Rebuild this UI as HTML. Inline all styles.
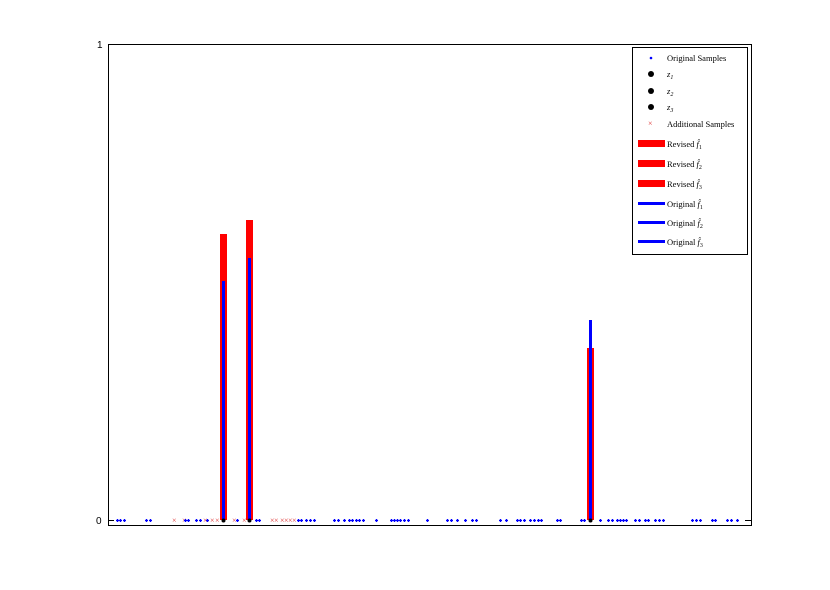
<!DOCTYPE html>
<html><head><meta charset="utf-8"><style>
html,body{margin:0;padding:0;background:#fff;width:830px;height:590px;overflow:hidden}
svg{display:block}
text{font-family:"Liberation Serif",serif;font-size:8.5px;fill:#000}
text.rx{fill:#d33;font-size:8px}
</style></head><body>
<svg width="830" height="590" viewBox="0 0 830 590">
<rect x="108.5" y="44.5" width="643" height="481" fill="#fff" stroke="#000" stroke-width="1"/>
<line x1="108" y1="44.5" x2="114" y2="44.5" stroke="#000"/>
<line x1="108" y1="520.5" x2="114" y2="520.5" stroke="#000"/>
<line x1="745" y1="520.5" x2="751" y2="520.5" stroke="#000"/>
<text x="97" y="48" style="font-size:10px;font-family:'Liberation Sans',sans-serif">1</text>
<text x="96" y="524" style="font-size:10px;font-family:'Liberation Sans',sans-serif">0</text>
<rect x="220" y="234" width="7" height="286" fill="#f00"/>
<rect x="222" y="281" width="3" height="239" fill="#00f"/>
<rect x="246" y="220" width="7" height="300" fill="#f00"/>
<rect x="248" y="258" width="3" height="262" fill="#00f"/>
<rect x="587" y="348" width="7" height="172" fill="#f00"/>
<rect x="589" y="320" width="3" height="200" fill="#00f"/>
<g fill="#000"><circle cx="223.5" cy="520.5" r="2"/><circle cx="249.5" cy="520.5" r="2"/><circle cx="590.5" cy="520.5" r="2"/></g>
<g>
<text class="rx" x="172" y="523">×</text><text class="rx" x="182" y="523">×</text><text class="rx" x="203" y="523">×</text><text class="rx" x="210" y="523">×</text><text class="rx" x="215" y="523">×</text><text class="rx" x="232" y="523">×</text><text class="rx" x="242" y="523">×</text><text class="rx" x="270" y="523">×</text><text class="rx" x="274" y="523">×</text><text class="rx" x="280" y="523">×</text><text class="rx" x="284" y="523">×</text><text class="rx" x="288" y="523">×</text><text class="rx" x="292" y="523">×</text>
</g>
<g stroke="#00f" stroke-width="1.3" fill="none">
<path d="M116 520.5h3M117.5 519v3M119 520.5h3M120.5 519v3M123 520.5h3M124.5 519v3M145 520.5h3M146.5 519v3M149 520.5h3M150.5 519v3 M184 520.5h3M185.5 519v3 M187 520.5h3M188.5 519v3 M195 520.5h3M196.5 519v3 M199 520.5h3M200.5 519v3 M206 520.5h3M207.5 519v3 M236 520.5h3M237.5 519v3 M255 520.5h3M256.5 519v3 M258 520.5h3M259.5 519v3 M297 520.5h3M298.5 519v3 M300 520.5h3M301.5 519v3 M305 520.5h3M306.5 519v3 M309 520.5h3M310.5 519v3 M313 520.5h3M314.5 519v3 M333 520.5h3M334.5 519v3 M337 520.5h3M338.5 519v3 M343 520.5h3M344.5 519v3 M348 520.5h3M349.5 519v3 M351 520.5h3M352.5 519v3 M355 520.5h3M356.5 519v3 M358 520.5h3M359.5 519v3 M362 520.5h3M363.5 519v3 M375 520.5h3M376.5 519v3 M390 520.5h3M391.5 519v3 M393 520.5h3M394.5 519v3 M396 520.5h3M397.5 519v3 M399 520.5h3M400.5 519v3 M403 520.5h3M404.5 519v3 M407 520.5h3M408.5 519v3 M426 520.5h3M427.5 519v3 M446 520.5h3M447.5 519v3 M450 520.5h3M451.5 519v3 M456 520.5h3M457.5 519v3 M464 520.5h3M465.5 519v3 M471 520.5h3M472.5 519v3 M475 520.5h3M476.5 519v3 M499 520.5h3M500.5 519v3 M505 520.5h3M506.5 519v3 M516 520.5h3M517.5 519v3 M519 520.5h3M520.5 519v3 M523 520.5h3M524.5 519v3 M529 520.5h3M530.5 519v3 M533 520.5h3M534.5 519v3 M537 520.5h3M538.5 519v3 M540 520.5h3M541.5 519v3 M556 520.5h3M557.5 519v3 M559 520.5h3M560.5 519v3 M580 520.5h3M581.5 519v3 M583 520.5h3M584.5 519v3 M599 520.5h3M600.5 519v3 M607 520.5h3M608.5 519v3 M611 520.5h3M612.5 519v3 M616 520.5h3M617.5 519v3 M619 520.5h3M620.5 519v3 M622 520.5h3M623.5 519v3 M625 520.5h3M626.5 519v3 M634 520.5h3M635.5 519v3 M638 520.5h3M639.5 519v3 M644 520.5h3M645.5 519v3 M647 520.5h3M648.5 519v3 M654 520.5h3M655.5 519v3 M658 520.5h3M659.5 519v3 M662 520.5h3M663.5 519v3 M691 520.5h3M692.5 519v3 M695 520.5h3M696.5 519v3 M699 520.5h3M700.5 519v3 M711 520.5h3M712.5 519v3 M714 520.5h3M715.5 519v3 M726 520.5h3M727.5 519v3 M730 520.5h3M731.5 519v3 M736 520.5h3M737.5 519v3"/>
</g>
<rect x="632.5" y="47.5" width="115" height="207" fill="#fff" stroke="#000"/>
<circle cx="651" cy="58" r="1.3" fill="#00f"/>
<text x="667" y="61">Original Samples</text>
<circle cx="651" cy="74" r="3" fill="#000"/><text x="667" y="77" font-style="italic">z<tspan font-size="6" dy="2">1</tspan></text>
<circle cx="651" cy="91" r="3" fill="#000"/><text x="667" y="94" font-style="italic">z<tspan font-size="6" dy="2">2</tspan></text>
<circle cx="651" cy="107" r="3" fill="#000"/><text x="667" y="110" font-style="italic">z<tspan font-size="6" dy="2">3</tspan></text>
<text class="rx" x="648" y="126">×</text>
<text x="667" y="127">Additional Samples</text>
<rect x="638" y="140" width="27" height="7" fill="#f00"/><text x="667" y="147">Revised <tspan font-style="italic">f̂</tspan><tspan font-size="6" dy="2">1</tspan></text>
<rect x="638" y="160" width="27" height="7" fill="#f00"/><text x="667" y="167">Revised <tspan font-style="italic">f̂</tspan><tspan font-size="6" dy="2">2</tspan></text>
<rect x="638" y="180" width="27" height="7" fill="#f00"/><text x="667" y="187">Revised <tspan font-style="italic">f̂</tspan><tspan font-size="6" dy="2">3</tspan></text>
<rect x="638" y="202" width="27" height="3" fill="#00f"/><text x="667" y="207">Original <tspan font-style="italic">f̂</tspan><tspan font-size="6" dy="2">1</tspan></text>
<rect x="638" y="221" width="27" height="3" fill="#00f"/><text x="667" y="226">Original <tspan font-style="italic">f̂</tspan><tspan font-size="6" dy="2">2</tspan></text>
<rect x="638" y="240" width="27" height="3" fill="#00f"/><text x="667" y="245">Original <tspan font-style="italic">f̂</tspan><tspan font-size="6" dy="2">3</tspan></text>
</svg>
</body></html>
